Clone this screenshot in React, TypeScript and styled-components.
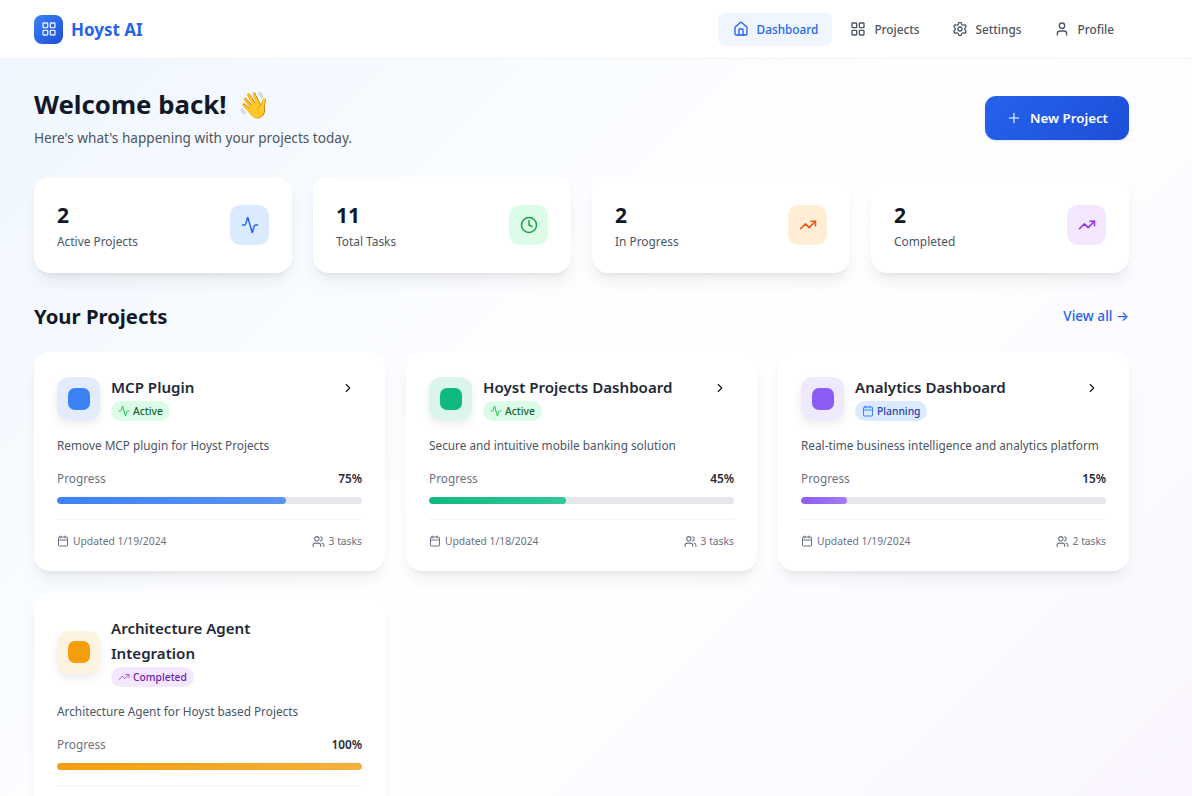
import React from "react";
import styled, { createGlobalStyle } from "styled-components";
import { Activity, Calendar, ChevronRight, Clock, House, LayoutGrid, Plus, Settings, TrendingUp, User, Users } from "lucide-react";

const Global = createGlobalStyle`
  html, body { margin: 0; padding: 0; height: 796px; overflow: hidden; }
  body { font-family: "Noto Sans", sans-serif; color: #111827; }
  * { box-sizing: border-box; }
`;

const Page = styled.div`
  height: 796px;
  overflow: hidden;
  background: linear-gradient(135deg, #eff6ff 0%, #ffffff 50%, #faf5ff 100%) top left / 100% 880px no-repeat;
`;

const Header = styled.header`
  height: 59px;
  background: #fff;
  border-bottom: 1px solid #f3f4f6;
  padding: 0 63px 0 34px;
  display: flex;
  align-items: center;
  justify-content: space-between;
`;

const Brand = styled.div`
  display: flex;
  align-items: center;
  gap: 8px;
`;

const LogoBox = styled.div`
  width: 29px;
  height: 29px;
  border-radius: 8px;
  background: linear-gradient(135deg, #3b82f6, #1d4ed8);
  color: rgba(255, 255, 255, 0.88);
  display: flex;
  align-items: center;
  justify-content: center;
`;

const BrandName = styled.span`
  font-size: 17px;
  font-weight: 700;
  color: #2563eb;
`;

const Nav = styled.nav`
  display: flex;
  gap: 3px;
  margin-right: 1px;
`;

const NavItem = styled.a<{ $active?: boolean }>`
  height: 33px;
  padding: 0 14px 0 15px;
  display: flex;
  align-items: center;
  gap: 8px;
  border-radius: 8px;
  font-size: 11.8px;
  font-weight: 500;
  color: ${(p) => (p.$active ? "#2563eb" : "#4b5563")};
  background: ${(p) => (p.$active ? "#eff6ff" : "transparent")};
`;

const Main = styled.main`
  padding: 29px 63px 0 34px;
`;

const Hero = styled.div`
  display: flex;
  justify-content: space-between;
  align-items: center;
  margin-bottom: 29px;
`;

const Title = styled.h1`
  margin: 0 0 8px;
  font-size: 25.8px;
  line-height: 32px;
  font-weight: 700;
  color: #111827;
`;

const Wave = styled.span`
  margin-left: 5px;
`;

const Subtitle = styled.p`
  margin: 0;
  font-size: 13.6px;
  line-height: 20px;
  color: #4b5563;
`;

const NewButton = styled.button`
  width: 144px;
  height: 44px;
  border: 0;
  border-radius: 11px;
  background: linear-gradient(135deg, #2563eb, #1d4ed8);
  color: #fff;
  font: 600 13.3px "Noto Sans", sans-serif;
  display: flex;
  align-items: center;
  justify-content: center;
  gap: 8px;
  box-shadow: 0 1px 2px rgba(37, 99, 235, 0.15);
`;

const StatGrid = styled.div`
  display: grid;
  grid-template-columns: repeat(4, 1fr);
  gap: 21px;
  margin-bottom: 29px;
`;

const StatCard = styled.div`
  height: 96px;
  border-radius: 16px;
  background: #fff;
  padding: 0 23px;
  display: flex;
  align-items: center;
  justify-content: space-between;
  box-shadow: 0 10px 15px -3px rgba(0, 0, 0, 0.08), 0 4px 6px -4px rgba(0, 0, 0, 0.08);
`;

const StatValue = styled.div`
  font-size: 21px;
  line-height: 30px;
  font-weight: 700;
  color: #111827;
`;

const StatLabel = styled.div`
  font-size: 11.9px;
  line-height: 18px;
  margin-top: 2px;
  color: #4b5563;
`;

const StatIcon = styled.div<{ $bg: string; $fg: string }>`
  width: 39px;
  height: 40px;
  border-radius: 11px;
  background: ${(p) => p.$bg};
  color: ${(p) => p.$fg};
  display: flex;
  align-items: center;
  justify-content: center;
`;

const SectionHead = styled.div`
  display: flex;
  justify-content: space-between;
  align-items: flex-start;
  height: 30px;
  margin-bottom: 20px;
`;

const SectionTitle = styled.h2`
  margin: 0;
  font-size: 20.3px;
  line-height: 28px;
  font-weight: 700;
  color: #111827;
`;

const ViewAll = styled.a`
  font-size: 13.6px;
  line-height: 28px;
  font-weight: 500;
  color: #2563eb;
`;

const ArrowGlyph = styled.span`
  font-family: Inter, sans-serif;
`;

const ProjectGrid = styled.div`
  display: grid;
  grid-template-columns: repeat(3, 1fr);
  column-gap: 21px;
  row-gap: 22px;
  align-items: start;
`;

const Card = styled.article`
  background: #fff;
  border-radius: 16px;
  padding: 23px 23px 22px;
  box-shadow: 0 10px 15px -3px rgba(0, 0, 0, 0.07), 0 4px 6px -4px rgba(0, 0, 0, 0.07);
`;

const CardHead = styled.div`
  display: flex;
  align-items: center;
  margin-bottom: 13px;
`;

const Tile = styled.div<{ $bg: string }>`
  flex: none;
  width: 43px;
  height: 43px;
  border-radius: 12px;
  background: ${(p) => p.$bg};
  display: flex;
  align-items: center;
  justify-content: center;
  margin-right: 11px;
  box-shadow: 0 4px 8px rgba(0, 0, 0, 0.08);
`;

const TileDot = styled.div<{ $color: string }>`
  width: 22px;
  height: 22px;
  border-radius: 7px;
  background: ${(p) => p.$color};
`;

const HeadText = styled.div`
  flex: 1;
  min-width: 0;
  padding-right: 32px;
`;

const CardTitle = styled.h3`
  margin: 0;
  font-size: 15.1px;
  line-height: 25.6px;
  font-weight: 600;
  color: #1f2937;
`;

const Badge = styled.span<{ $bg: string; $fg: string; $ic: string }>`
  display: inline-flex;
  align-items: center;
  gap: 3px;
  height: 20.5px;
  padding: 0 7px;
  border-radius: 999px;
  font-size: 10.3px;
  font-weight: 500;
  background: ${(p) => p.$bg};
  color: ${(p) => p.$fg};
  vertical-align: top;
  svg { color: ${(p) => p.$ic}; }
`;

const Arrow = styled.div<{ $hidden?: boolean }>`
  flex: none;
  align-self: flex-start;
  margin: 6px 7px 0 0;
  color: #111827;
  display: flex;
  visibility: ${(p) => (p.$hidden ? "hidden" : "visible")};
`;

const Desc = styled.p`
  margin: 0 0 15px;
  font-size: 11.8px;
  line-height: 18px;
  color: #4b5563;
`;

const ProgressRow = styled.div`
  display: flex;
  justify-content: space-between;
  align-items: center;
  font-size: 11.8px;
  line-height: 18px;
  margin-bottom: 10px;
`;

const ProgressLabel = styled.span`
  color: #6b7280;
`;

const ProgressValue = styled.span`
  font-weight: 600;
  color: #1f2937;
`;

const Track = styled.div`
  height: 7px;
  border-radius: 4px;
  background: #e5e7eb;
  overflow: hidden;
  margin-bottom: 15px;
`;

const Fill = styled.div<{ $from: string; $to: string }>`
  height: 100%;
  border-radius: 4px;
  background: linear-gradient(90deg, ${(p) => p.$from}, ${(p) => p.$to});
`;

const CardFoot = styled.div`
  border-top: 1px solid #f3f4f6;
  padding-top: 14px;
  display: flex;
  justify-content: space-between;
  font-size: 10.3px;
  line-height: 15px;
  color: #6b7280;
`;

const Meta = styled.span`
  display: flex;
  align-items: center;
  gap: 4px;
`;

const stats = [
  { value: "2", label: "Active Projects", bg: "#dbeafe", fg: "#2563eb", Icon: Activity },
  { value: "11", label: "Total Tasks", bg: "#dcfce7", fg: "#16a34a", Icon: Clock },
  { value: "2", label: "In Progress", bg: "#ffedd5", fg: "#ea580c", Icon: TrendingUp },
  { value: "2", label: "Completed", bg: "#f3e8ff", fg: "#9333ea", Icon: TrendingUp },
];

const badges = {
  Active: { bg: "#dcfce7", fg: "#166534", ic: "#22c55e", Icon: Activity },
  Planning: { bg: "#dbeafe", fg: "#1e40af", ic: "#3b82f6", Icon: Calendar },
  Completed: { bg: "#f3e8ff", fg: "#6b21a8", ic: "#a855f7", Icon: TrendingUp },
};

const projects = [
  { title: "MCP Plugin", status: "Active" as const, desc: "Remove MCP plugin for Hoyst Projects", pct: 75, date: "1/19/2024", tasks: 3, tile: "#e2ecfd", color: "#3b82f6", to: "#5b94f8", noArrow: false },
  { title: "Hoyst Projects Dashboard", status: "Active" as const, desc: "Secure and intuitive mobile banking solution", pct: 45, date: "1/18/2024", tasks: 3, tile: "#dcf5ec", color: "#10b981", to: "#34c79a", noArrow: false },
  { title: "Analytics Dashboard", status: "Planning" as const, desc: "Real-time business intelligence and analytics platform", pct: 15, date: "1/19/2024", tasks: 2, tile: "#efe9fe", color: "#8b5cf6", to: "#a27cf8", noArrow: false },
  { title: "Architecture Agent Integration", status: "Completed" as const, desc: "Architecture Agent for Hoyst based Projects", pct: 100, date: "1/17/2024", tasks: 2, tile: "#fdf3e0", color: "#f59e0b", to: "#f6b03c", noArrow: true },
];

export default function App() {
  return (
    <Page>
      <Global />
      <Header>
        <Brand>
          <LogoBox><LayoutGrid size={16} strokeWidth={2} /></LogoBox>
          <BrandName>Hoyst AI</BrandName>
        </Brand>
        <Nav>
          <NavItem $active><House size={16} />Dashboard</NavItem>
          <NavItem><LayoutGrid size={16} />Projects</NavItem>
          <NavItem><Settings size={16} />Settings</NavItem>
          <NavItem><User size={16} />Profile</NavItem>
        </Nav>
      </Header>
      <Main>
        <Hero>
          <div>
            <Title>Welcome back! <Wave>👋</Wave></Title>
            <Subtitle>Here's what's happening with your projects today.</Subtitle>
          </div>
          <NewButton><Plus size={16} strokeWidth={1.6} />New Project</NewButton>
        </Hero>
        <StatGrid>
          {stats.map(({ value, label, bg, fg, Icon }) => (
            <StatCard key={label}>
              <div>
                <StatValue>{value}</StatValue>
                <StatLabel>{label}</StatLabel>
              </div>
              <StatIcon $bg={bg} $fg={fg}><Icon size={18} /></StatIcon>
            </StatCard>
          ))}
        </StatGrid>
        <SectionHead>
          <SectionTitle>Your Projects</SectionTitle>
          <ViewAll>View all <ArrowGlyph>→</ArrowGlyph></ViewAll>
        </SectionHead>
        <ProjectGrid>
          {projects.map((p) => {
            const b = badges[p.status];
            return (
              <Card key={p.title}>
                <CardHead>
                  <Tile $bg={p.tile}><TileDot $color={p.color} /></Tile>
                  <HeadText>
                    <CardTitle>{p.title}</CardTitle>
                    <Badge $bg={b.bg} $fg={b.fg} $ic={b.ic}><b.Icon size={12} />{p.status}</Badge>
                  </HeadText>
                  <Arrow $hidden={p.noArrow}><ChevronRight size={14} /></Arrow>
                </CardHead>
                <Desc>{p.desc}</Desc>
                <ProgressRow>
                  <ProgressLabel>Progress</ProgressLabel>
                  <ProgressValue>{p.pct}%</ProgressValue>
                </ProgressRow>
                <Track><Fill $from={p.color} $to={p.to} style={{ width: `${p.pct}%` }} /></Track>
                <CardFoot>
                  <Meta><Calendar size={12} />Updated {p.date}</Meta>
                  <Meta><Users size={13} />{p.tasks} tasks</Meta>
                </CardFoot>
              </Card>
            );
          })}
        </ProjectGrid>
      </Main>
    </Page>
  );
}
